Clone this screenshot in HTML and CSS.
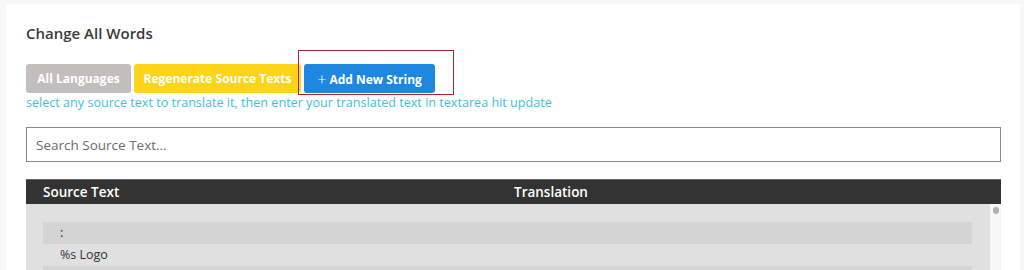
FILE: index.html
```html
<!DOCTYPE html>
<html lang="en">

<head>
    <meta charset="UTF-8">
    <meta name="viewport" content="width=device-width, initial-scale=1.0">
    <title>Change All Words</title>
    <link rel="stylesheet" href="styles.css">
</head>

<body>
    <div class="card">
        <h2 class="title">Change All Words</h2>

        <div class="actions">
            <button class="btn btn-gray">All Languages</button>
            <button class="btn btn-yellow">Regenerate Source Texts</button>
            <button class="btn btn-blue"><span class="plus">+</span> Add New String</button>
            <!-- highlight box -->
            <span class="highlight"></span>
        </div>
        <p class="hint">select any source text to translate it, then enter your translated text in textarea hit update</p>

        <input class="search" type="text" placeholder="Search Source Text...">

        <div class="table">
            <div class="table-head">
                <span class="col-source">Source Text</span>
                <span class="col-trans">Translation</span>
            </div>
            <div class="table-body">
                <div class="rows">
                    <div class="row odd">:</div>
                    <div class="row">%s Logo</div>
                    <div class="row odd">&nbsp;</div>
                </div>
                <div class="scrollbar"><span class="thumb"></span></div>
            </div>
        </div>
    </div>
</body>

</html>
```

FILE: styles.css
```css
* {
    margin: 0;
    padding: 0;
    box-sizing: border-box;
}

body {
    background-color: #f7f7f7;
    font-family: "Open Sans", Arial, sans-serif;
    color: #333;
    padding: 4px 4px 0 6px;
    height: 270px;
    overflow: hidden;
}

.card {
    background-color: #ffffff;
    padding: 20px 19px 0 20px;
    height: 266px;
    overflow: hidden;
}

.title {
    font-size: 15px;
    font-weight: 600;
    color: #3a3a3a;
    line-height: 18px;
}

.actions {
    position: relative;
    display: flex;
    gap: 3px;
    margin-top: 22px;
}

.btn {
    height: 29px;
    border: none;
    border-radius: 3px;
    color: #ffffff;
    font-family: "Open Sans", Arial, sans-serif;
    font-size: 12px;
    font-weight: 700;
    padding: 0;
    white-space: nowrap;
}

.btn-gray {
    width: 105px;
    background-color: #c2bebe;
}

.btn-yellow {
    width: 167px;
    background-color: #fcd419;
}

.btn-blue {
    width: 131px;
    background-color: #1e88e0;
}

.plus {
    font-weight: 300;
    font-size: 16px;
    vertical-align: -1px;
}

.highlight {
    position: absolute;
    left: 272px;
    top: -14px;
    width: 156px;
    height: 45px;
    border: 1.5px solid #b3202a;
}

.hint {
    font-size: 12.6px;
    color: #3cc3dc;
    line-height: 18px;
    margin-top: 1px;
}

.search {
    display: block;
    width: 100%;
    height: 35px;
    margin-top: 15px;
    border: 1px solid #8a8a8a;
    padding: 0 9px;
    font-family: "Open Sans", Arial, sans-serif;
    font-size: 13.5px;
    outline: none;
}

.search::placeholder {
    color: #6b6b6b;
}

.table {
    margin-top: 17px;
}

.table-head {
    display: flex;
    background-color: #333333;
    color: #ffffff;
    height: 25px;
    align-items: center;
    font-size: 13.5px;
    font-weight: 600;
    border-top: 1px solid #666;
}

.col-source {
    width: 488px;
    padding-left: 17px;
}

.table-body {
    display: flex;
    height: 80px;
}

.rows {
    flex: 1;
    background-color: #e0e0e0;
    padding: 18px 18px 0 17px;
}

.row {
    height: 22px;
    line-height: 22px;
    padding-left: 17px;
    font-size: 12.5px;
    color: #333;
}

.row.odd {
    background-color: #d4d4d4;
}

.scrollbar {
    width: 11px;
    background-color: #f6f6f6;
    display: flex;
    justify-content: center;
    padding-top: 3px;
}

.thumb {
    width: 6px;
    height: 7px;
    border-radius: 3px;
    background-color: #b0b0b0;
}
```
